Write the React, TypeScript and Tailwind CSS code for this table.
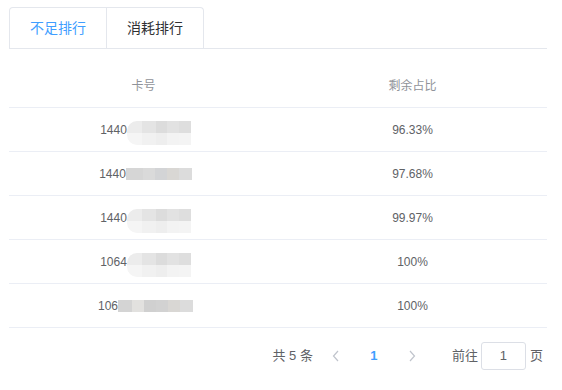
import { useState } from "react";
import clsx from "clsx";

const font = "font-['Liberation_Sans','Noto_Sans_CJK_SC',sans-serif]";

type Mosaic = { widths: string[]; rows: string[][]; blob?: boolean };

const soft: Mosaic = {
  widths: ["w-[15px]", "w-[14px]", "w-[11px]", "w-[12px]", "w-[12px]"],
  rows: [
    ["bg-[#ececec]", "bg-[#e4e4e4]", "bg-[#dcdcdc]", "bg-[#e2e2e2]", "bg-[#dedede]"],
    ["bg-[#f5f5f5]", "bg-[#f1f1f1]", "bg-[#eeeeee]", "bg-[#f3f3f3]", "bg-[#f4f4f4]"],
  ],
  blob: true,
};

const hard: Mosaic = {
  widths: ["w-[17px]", "w-[12px]", "w-[12px]", "w-[12px]", "w-[13px]"],
  rows: [["bg-[#d6d6d6]", "bg-[#dadada]", "bg-[#d3d4d6]", "bg-[#d9d7d4]", "bg-[#dcdcdc]"]],
};

const hardWide: Mosaic = {
  widths: ["w-[14px]", "w-[12px]", "w-[12px]", "w-[12px]", "w-[12px]", "w-[13px]"],
  rows: [["bg-[#d4d4d4]", "bg-[#e2e1df]", "bg-[#d0d0d0]", "bg-[#d2d2d2]", "bg-[#d9d7d4]", "bg-[#dcdcdc]"]],
};

const rows = [
  { prefix: "1440", mosaic: soft, pct: "96.33%" },
  { prefix: "1440", mosaic: hard, pct: "97.68%" },
  { prefix: "1440", mosaic: soft, pct: "99.97%" },
  { prefix: "1064", mosaic: soft, pct: "100%" },
  { prefix: "106", mosaic: hardWide, pct: "100%" },
];

const Blur = ({ mosaic }: { mosaic: Mosaic }) => (
  <span className={clsx("flex flex-col", mosaic.blob && "mt-[6px]")}>
    {mosaic.rows.map((row, r) => (
      <span key={r} className="flex h-[12px]">
        {row.map((c, i) => (
          <span
            key={i}
            className={clsx(
              mosaic.widths[i],
              c,
              "h-[12px]",
              mosaic.blob && i === 0 && r === 0 && "rounded-tl-[10px]",
              mosaic.blob && i === 0 && r === 1 && "rounded-bl-[10px]"
            )}
          />
        ))}
      </span>
    ))}
  </span>
);

const Chevron = ({ dir }: { dir: "left" | "right" }) => (
  <svg width="8" height="12" viewBox="0 0 8 12" fill="none">
    <path
      d={dir === "left" ? "M6 1 L1.5 6 L6 11" : "M2 1 L6.5 6 L2 11"}
      stroke="#c0c4cc"
      strokeWidth="1.2"
    />
  </svg>
);

export default function App() {
  const [tab, setTab] = useState(0);
  const tabs = ["不足排行", "消耗排行"];

  return (
    <div className={clsx(font, "w-[562px] h-[390px] bg-white pl-[9px] pr-[15px] pt-[7px]")}>
      <div className="flex border-b border-[#e4e7ed]">
        <div className="flex border border-b-0 border-[#e4e7ed] rounded-t-[4px]">
          {tabs.map((t, i) => (
            <div
              key={t}
              role="button"
              onClick={() => setTab(i)}
              className={clsx(
                "h-[40px] leading-[40px] px-[20px] text-[14px] cursor-pointer",
                i > 0 && "border-l border-[#e4e7ed]",
                tab === i ? "text-[#409eff]" : "text-[#303133]"
              )}
            >
              {t}
            </div>
          ))}
        </div>
      </div>

      <div className="mt-[15px] text-[12px]">
        <div className="grid grid-cols-2 h-[44px] items-center border-b border-[#ebeef5] text-[#909399]">
          <div className="text-center">卡号</div>
          <div className="text-center">剩余占比</div>
        </div>
        {rows.map((row, i) => (
          <div
            key={i}
            className="grid grid-cols-2 h-[44px] items-center border-b border-[#ebeef5] text-[#606266]"
          >
            <div className="flex justify-center items-center">
              <span className="ml-[4px]">{row.prefix}</span>
              <Blur mosaic={row.mosaic} />
            </div>
            <div className="text-center">{row.pct}</div>
          </div>
        ))}
      </div>

      <div className="mt-[14px] h-[28px] flex items-center justify-end pr-[4px] text-[13px] text-[#606266]">
        <span className="mr-[8px]">共 5 条</span>
        <span className="w-[30px] flex justify-center">
          <Chevron dir="left" />
        </span>
        <span className="w-[46px] text-center text-[#409eff] font-bold">1</span>
        <span className="w-[30px] flex justify-center">
          <Chevron dir="right" />
        </span>
        <span className="ml-[25px]">前往</span>
        <span className="ml-[3px] w-[45px] h-[28px] flex items-center justify-center border border-[#dcdfe6] rounded-[3px]">
          1
        </span>
        <span className="ml-[4px]">页</span>
      </div>
    </div>
  );
}
